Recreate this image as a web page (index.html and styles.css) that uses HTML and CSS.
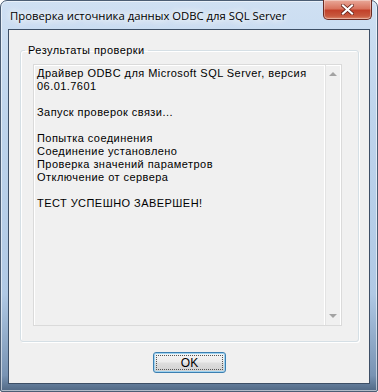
FILE: index.html
```html
<!DOCTYPE html>
<html lang="ru">
<head>
  <meta charset="UTF-8" />
  <title>Проверка источника данных ODBC для SQL Server</title>
  <link rel="stylesheet" href="styles.css">
</head>
<body>
  <div class="window">
    <div class="titlebar">
      <span class="title">Проверка источника данных ODBC для SQL Server</span>
      <button class="close" title="Закрыть">
        <svg width="13" height="11" viewBox="0 0 13 11">
          <path d="M2 1.5 L11 9.5 M11 1.5 L2 9.5" stroke="#5a1a12" stroke-width="3.6" stroke-linecap="square" fill="none"/>
          <path d="M2 1.5 L11 9.5 M11 1.5 L2 9.5" stroke="#ffffff" stroke-width="2.2" stroke-linecap="square" fill="none"/>
        </svg>
      </button>
    </div>
    <div class="client">
      <fieldset class="group">
        <legend>Результаты проверки</legend>
        <div class="edit">
          <div class="edit-text">
            <div>Драйвер ODBC для Microsoft SQL Server, версия</div>
            <div>06.01.7601</div>
            <div>&nbsp;</div>
            <div>Запуск проверок связи...</div>
            <div>&nbsp;</div>
            <div>Попытка соединения</div>
            <div>Соединение установлено</div>
            <div>Проверка значений параметров</div>
            <div>Отключение от сервера</div>
            <div>&nbsp;</div>
            <div>ТЕСТ УСПЕШНО ЗАВЕРШЕН!</div>
          </div>
          <div class="scrollbar">
            <span class="arrow up"></span>
            <span class="arrow down"></span>
          </div>
        </div>
      </fieldset>
      <div class="buttons">
        <button class="btn">OK</button>
      </div>
    </div>
  </div>
</body>
</html>
```

FILE: styles.css
```css
body {
  margin: 0;
  background: #ffffff;
}

.window {
  width: 378px;
  height: 392px;
  box-sizing: border-box;
  display: flex;
  flex-direction: column;
  padding: 0 7px 7px 7px;
  border: 1px solid #4b5d74;
  border-radius: 7px 7px 2px 2px;
  background: linear-gradient(to bottom, #cfe0f3 0%, #bed4ec 30%, #b0c9e5 75%, #7893b3 96%, #506884 100%);
  box-shadow: inset 0 0 0 1px rgba(255, 255, 255, 0.55);
}

.titlebar {
  height: 28px;
  display: flex;
  align-items: flex-start;
  justify-content: space-between;
}

.title {
  margin-top: 7px;
  padding-left: 2px;
  font-family: "Open Sans", "Noto Sans", sans-serif;
  font-size: 11.3px;
  color: #000000;
  text-shadow: 0 0 6px #ffffff, 0 0 10px #ffffff, 0 0 14px rgba(255, 255, 255, 0.8);
}

.close {
  width: 49px;
  height: 20px;
  margin: -1px -2px 0 0;
  padding: 0;
  display: flex;
  align-items: center;
  justify-content: center;
  border: 1px solid #6b2a22;
  border-top: none;
  border-radius: 0 0 5px 5px;
  background: linear-gradient(to bottom, #e9a99a 0%, #d9745f 45%, #c2412a 55%, #c85a3f 85%, #e08a6e 100%);
  box-shadow: inset 0 0 0 1px rgba(255, 255, 255, 0.35);
}

.client {
  flex: 1;
  display: flex;
  flex-direction: column;
  background: #f0f0f0;
  border: 1px solid #3d4f66;
  font-family: "Liberation Sans", Arial, sans-serif;
  font-size: 11px;
  letter-spacing: 0.45px;
  color: #000000;
}

.group {
  margin: 14px 10px 0 11px;
  padding: 7px 16px 15px 12px;
  border: 1px solid #d5dfe5;
  border-radius: 3px;
  box-shadow: 1px 1px 0 #ffffff, inset 1px 1px 0 #ffffff;
}

.group legend {
  padding: 0 3px;
  margin-left: -8px;
  line-height: 13px;
}

.edit {
  height: 260px;
  display: flex;
  border: 1px solid #dadada;
  box-shadow: inset 1px 1px 0 #ffffff;
}

.edit-text {
  flex: 1;
  padding: 2px 3px;
  line-height: 13px;
  white-space: nowrap;
  overflow: hidden;
}

.scrollbar {
  width: 16px;
  display: flex;
  flex-direction: column;
  justify-content: space-between;
  align-items: center;
  padding: 7px 0;
  border-left: 1px solid #ffffff;
  box-shadow: inset 1px 0 0 #e3e3e3, inset -1px 0 0 #ffffff;
}

.arrow {
  width: 0;
  height: 0;
  border-left: 4px solid transparent;
  border-right: 4px solid transparent;
}

.arrow.up {
  border-bottom: 4px solid #a3a3a3;
}

.arrow.down {
  border-top: 4px solid #a3a3a3;
}

.buttons {
  display: flex;
  justify-content: center;
  padding-top: 10px;
}

.btn {
  width: 73px;
  height: 21px;
  padding: 0;
  margin-left: 1px;
  font-family: "Liberation Sans", Arial, sans-serif;
  font-size: 12px;
  color: #000000;
  border: 1px solid #3c7fb1;
  border-radius: 3px;
  background: linear-gradient(to bottom, #f4f4f4 0%, #ececec 48%, #dedede 52%, #d1d1d1 100%);
  box-shadow: inset 0 0 0 1px #9fd3f0;
  outline: 1px dotted #555555;
  outline-offset: -4px;
}
```
